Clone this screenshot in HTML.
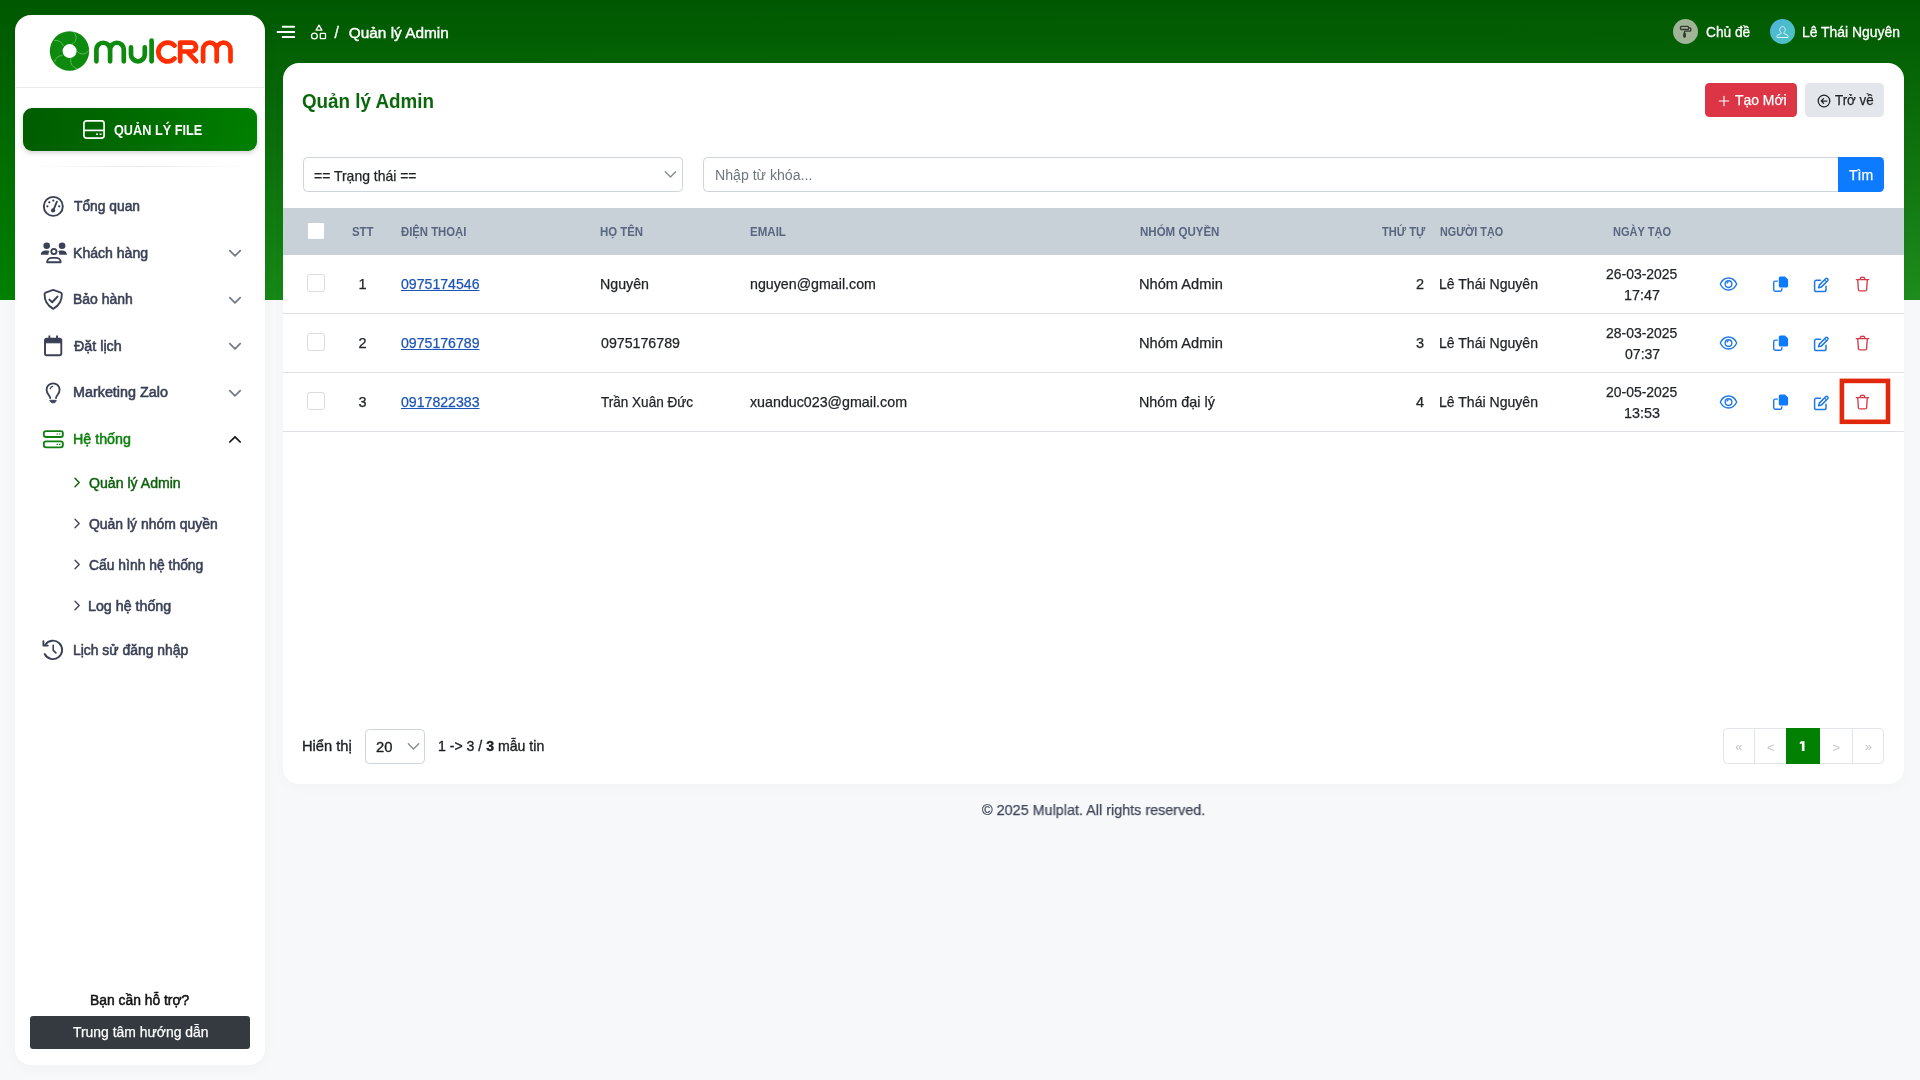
<!DOCTYPE html>
<html lang="vi">
<head>
<meta charset="utf-8">
<title>Quản lý Admin</title>
<style>
*{box-sizing:border-box;margin:0;padding:0}
html,body{width:1920px;height:1080px;overflow:hidden}
body{font-family:"Liberation Sans",sans-serif;background:#f7f8fa;color:#212529;position:relative;font-size:14px}
.abs{position:absolute}
.t,.th,.td{transform-origin:0 50%}
#L{position:absolute;left:0;top:0;width:1920px;height:1080px;will-change:transform}
.t{position:absolute;white-space:nowrap;line-height:1}
#band{position:absolute;left:0;top:0;width:1920px;height:300px;background:linear-gradient(to bottom,rgba(0,89,0,1) 0%,rgba(0,89,0,.9) 12%,rgba(0,89,0,0) 100%),linear-gradient(to right,#008000 0%,#038103 1%,#168816 14%,#1e8c1e 100%)}
#side{position:absolute;left:15px;top:15px;width:250px;height:1050px;background:#fff;border-radius:16px;box-shadow:0 3px 14px rgba(0,0,0,.03)}
#card{position:absolute;left:283px;top:63px;width:1621px;height:721px;background:#fff;border-radius:16px;box-shadow:0 3px 14px rgba(0,0,0,.022)}
.m{color:#3a4156;font-size:14px;-webkit-text-stroke:.55px #3a4156}
.g{color:#0f800f;-webkit-text-stroke:.5px #0f800f}

.th{position:absolute;white-space:nowrap;line-height:1;font-size:12px;font-weight:bold;color:#58667f;top:225.5px}
.td{position:absolute;white-space:nowrap;line-height:1;font-size:14.5px;color:#212529;-webkit-text-stroke:.25px #212529}
.lnk{color:#1c55b5;-webkit-text-stroke:.25px #1c55b5;text-decoration:underline;text-underline-offset:1.2px;text-decoration-thickness:1px}
.cb{position:absolute;left:307px;width:18px;height:18px;border:1.2px solid #d9dce0;border-radius:3px;background:#fff}
.sep{position:absolute;left:283px;width:1621px;height:1.2px;background:#dcdfe3}
.ic{position:absolute;overflow:visible}
#tfile{left:113.72px!important;transform:scaleX(0.9066)}
#m1{left:73.83px!important;transform:scaleX(0.9862)}
#m2{left:73.02px!important;transform:scaleX(1.0048)}
#m3{left:72.69px!important;transform:scaleX(0.9972)}
#m4{left:73.99px!important;transform:scaleX(1.0226)}
#m5{left:73.12px!important;transform:scaleX(1.0250)}
#m6{left:73.12px!important;transform:scaleX(1.0185)}
#s1{left:88.75px!important;transform:scaleX(1.0073)}
#s2{left:88.92px!important;transform:scaleX(0.9960)}
#s3{left:88.90px!important;transform:scaleX(0.9923)}
#s4{left:88.43px!important;transform:scaleX(1.0170)}
#m7{left:73.05px!important;transform:scaleX(0.9931)}
#thelp{left:90.43px!important;transform:scaleX(0.9898)}
#tguide{left:72.60px!important;transform:scaleX(0.9594)}
#bc{left:348.75px!important;transform:scaleX(1.0000)}
#tcd{left:1705.53px!important;transform:scaleX(0.9799)}
#tuser{left:1802.09px!important;transform:scaleX(0.9943)}
#title{left:302.20px!important;transform:scaleX(0.9393)}
#tnew{left:1734.70px!important;transform:scaleX(0.9593)}
#tback{left:1834.82px!important;transform:scaleX(0.9191)}
#tfind{left:1849.44px!important;transform:scaleX(0.9685)}
#tsel{left:313.53px!important;transform:scaleX(0.9633)}
#tph{left:714.85px!important;transform:scaleX(1.0080)}
#h1{left:351.73px!important;transform:scaleX(0.9523)}
#h2{left:400.58px!important;transform:scaleX(0.9433)}
#h3{left:599.95px!important;transform:scaleX(0.9511)}
#h4{left:750.00px!important;transform:scaleX(0.9623)}
#h5{left:1139.62px!important;transform:scaleX(0.9608)}
#h6{left:1381.59px!important;transform:scaleX(0.9279)}
#h7{left:1439.61px!important;transform:scaleX(0.8987)}
#h8{left:1613.04px!important;transform:scaleX(0.9194)}
#r1p{left:400.94px!important;transform:scaleX(0.9733)}
#r2p{left:400.94px!important;transform:scaleX(0.9733)}
#r3p{left:400.94px!important;transform:scaleX(0.9733)}
#r1h{left:600.46px!important;transform:scaleX(0.9807)}
#r2h{left:600.73px!important;transform:scaleX(0.9791)}
#r3h{left:600.91px!important;transform:scaleX(0.9334)}
#r1e{left:749.95px!important;transform:scaleX(0.9807)}
#r3e{left:750.16px!important;transform:scaleX(0.9824)}
#r1g{left:1139.25px!important;transform:scaleX(1.0094)}
#r2g{left:1139.25px!important;transform:scaleX(1.0093)}
#r3g{left:1139.34px!important;transform:scaleX(0.9904)}
#r1c{left:1438.97px!important;transform:scaleX(0.9691)}
#r2c{left:1438.98px!important;transform:scaleX(0.9691)}
#r3c{left:1438.98px!important;transform:scaleX(0.9691)}
#r1d{left:1606.36px!important;transform:scaleX(0.9620)}
#r2d{left:1606.36px!important;transform:scaleX(0.9620)}
#r3d{left:1606.36px!important;transform:scaleX(0.9620)}
#r1t{left:1623.93px!important;transform:scaleX(0.9882)}
#r2t{left:1624.81px!important;transform:scaleX(0.9691)}
#r3t{left:1623.78px!important;transform:scaleX(0.9883)}
#fshow{left:302.41px!important;transform:scaleX(1.0124)}
#f20{left:375.67px!important;transform:scaleX(1.0199)}
#fcount{left:437.96px!important;transform:scaleX(0.9726)}
#copy{left:981.84px!important;transform:scaleX(0.9919)}

</style>
</head>
<body>
<div id="L">
<div id="band"></div>
<div id="side"></div>
<!-- logo -->
<svg class="abs" style="left:0;top:0" width="270" height="100" viewBox="0 0 270 100">
<circle cx="69.5" cy="51" r="19.7" fill="#0e8a0e"/>
<g fill="none" stroke="#62c862" stroke-width=".8">
<path d="M73.4 32.2A7 7 0 0 1 72.1 44.1"/>
<path d="M88.9 50.2A7.2 7.2 0 0 1 76.8 51"/>
<path d="M54 40.5 a8.5 8.5 0 0 1 9.5 5.5"/>
<path d="M54.5 62 a8.5 8.5 0 0 1 8 -6.5"/>
<path d="M77.700 69A8.500 8.500 0 0 1 70.900 58.400"/>
</g>
<circle cx="69.6" cy="51.1" r="7" fill="#fff"/>
<g fill="none" stroke="#0e8a0e" stroke-width="4.7" stroke-linecap="round" stroke-linejoin="round">
<path d="M96.4 61.3V49.6a6.85 6.85 0 0 1 13.7 0V61.3M110.1 49.6a6.85 6.85 0 0 1 13.7 0V61.3"/>
<path d="M131 47.4V54.4a6.9 6.9 0 0 0 13.8 0V47.4"/>
<path d="M151.6 40.5V61.3"/>
</g>
<g fill="none" stroke="#ff2e00" stroke-width="4.7" stroke-linecap="round" stroke-linejoin="round">
<path d="M174.6 45.6A9.4 9.4 0 1 0 174.6 58.4"/>
<path d="M180.2 61.3V42.6H191.6a4.45 4.45 0 0 1 0 8.9H180.4M187.6 52.2L196.2 61.2"/>
<path d="M203.1 61.3V49.5a6.8 6.8 0 0 1 13.6 0V61.3M216.7 49.5a6.9 6.9 0 0 1 13.8 0V61.3"/>
</g>
</svg>
<div class="abs" style="left:15px;top:87px;width:250px;height:1px;background:#e9ebee"></div>
<!-- file button -->
<div class="abs" style="left:23px;top:108px;width:234px;height:43px;border-radius:9px;background:linear-gradient(100deg,#005c00 0%,#006a00 45%,#008000 100%);box-shadow:0 2px 5px rgba(0,0,0,.18)"></div>
<svg class="abs" style="left:83px;top:120px" width="22" height="19" viewBox="0 0 22 19" fill="none" stroke="#fff" stroke-width="1.7"><rect x=".9" y=".9" width="20.2" height="17.2" rx="2.6"/><path d="M.9 10.4H21.1"/><path d="M13 14.3h2M16.6 14.3h2" stroke-width="1.6"/></svg>
<div class="t" id="tfile" style="left:114px;top:122.5px;font-size:14px;font-weight:bold;color:#fff">QUẢN LÝ FILE</div>
<div class="abs" style="left:31px;top:166px;width:218px;height:1px;background:linear-gradient(90deg,rgba(0,0,0,0),rgba(0,0,0,.09),rgba(0,0,0,0))"></div>
<!-- menu -->
<div class="t m" id="m1" style="left:73px;top:199.4px">Tổng quan</div>
<div class="t m" id="m2" style="left:73px;top:245.5px">Khách hàng</div>
<div class="t m" id="m3" style="left:73px;top:292px">Bảo hành</div>
<div class="t m" id="m4" style="left:73px;top:338.5px">Đặt lịch</div>
<div class="t m" id="m5" style="left:73px;top:385.4px">Marketing Zalo</div>
<div class="t m g" id="m6" style="left:73px;top:431.7px">Hệ thống</div>
<div class="t m" id="s1" style="left:89px;top:476px;color:#0a5e0a;-webkit-text-stroke:.45px #0a5e0a">Quản lý Admin</div>
<div class="t m" id="s2" style="left:89px;top:517px">Quản lý nhóm quyền</div>
<div class="t m" id="s3" style="left:89px;top:558px">Cấu hình hệ thống</div>
<div class="t m" id="s4" style="left:89px;top:599px">Log hệ thống</div>
<div class="t m" id="m7" style="left:73px;top:642.5px">Lịch sử đăng nhập</div>
<!-- sidebar icons -->
<svg class="ic" style="left:40px;top:194px" width="26" height="26" viewBox="40 194 26 26" fill="none" stroke="#3a4156" stroke-width="1.900" stroke-linecap="round"><circle cx="53.300" cy="206.400" r="9.500"/><path d="M56.900 201.700L53.700 209.300" stroke-width="1.900"/><circle cx="53.100" cy="210.400" r="2.150" fill="#3a4156" stroke="none"/><g fill="#3a4156" stroke="none"><circle cx="47.400" cy="206.300" r="1.150"/><circle cx="49.300" cy="202.300" r="1.150"/><circle cx="53.300" cy="200.600" r="1.150"/><circle cx="59.200" cy="206.300" r="1.150"/></g></svg>
<svg class="ic" style="left:38px;top:240px" width="32" height="26" viewBox="38 240 32 26" fill="#3a4156"><circle cx="46.700" cy="245.700" r="3.300"/><circle cx="62.100" cy="245.700" r="3.300"/><path d="M40.800 254.800c0-2.600 1.800-4.300 4.300-4.300h2.600c.8 0 1.300.3 1.900.8-1 1-1.300 2.200-1.100 3.500z"/><path d="M66.900 254.800c0-2.600-1.800-4.300-4.300-4.300h-2.600c-.8 0-1.300.3-1.900.8 1 1 1.300 2.200 1.100 3.500z"/><circle cx="53.900" cy="251.500" r="2.600" fill="none" stroke="#3a4156" stroke-width="1.850"/><path d="M47.100 262.200c0-2.700 2.300-4.300 5-4.300h3.600c2.700 0 5 1.600 5 4.300z" fill="none" stroke="#3a4156" stroke-width="1.850" stroke-linejoin="round"/></svg>
<svg class="ic" style="left:40px;top:286px" width="26" height="26" viewBox="40 286 26 26" fill="none" stroke="#3a4156" stroke-width="1.900" stroke-linejoin="round" stroke-linecap="round"><path d="M53.200 289.900l7.600 2.800c.700.250 1.050.800 1.050 1.500 0 6.200-2.600 11.300-8.650 14.600-6.050-3.300-8.650-8.400-8.650-14.600 0-.700.350-1.250 1.050-1.500z"/><path d="M49.400 299.600l2.800 2.700 5.300-5.700" stroke-width="2"/></svg>
<svg class="ic" style="left:40px;top:332px" width="26" height="26" viewBox="40 332 26 26" fill="none" stroke="#3a4156" stroke-width="1.900" stroke-linejoin="round"><rect x="45" y="338.700" width="16.300" height="16.500" rx="1.800"/><path d="M45 339.500h16.300v3.300H45z" fill="#3a4156" stroke-width="1"/><path d="M49.400 335.600v3M57 335.600v3" stroke-linecap="butt"/></svg>
<svg class="ic" style="left:40px;top:378px" width="26" height="28" viewBox="40 378 26 28" fill="none" stroke="#3a4156" stroke-width="1.850" stroke-linecap="round" stroke-linejoin="round"><path d="M50.200 398.100c0-2.700-3.600-3.900-3.600-8.300a6.500 6.500 0 0 1 13 0c0 4.400-3.600 5.600-3.600 8.300"/><path d="M50.300 388.600a2.900 2.900 0 0 1 2.300-2.300" stroke-width="1.300"/><path d="M50 400.300h6.300l-.8 1.700a1.500 1.500 0 0 1-1.300.8h-2.100a1.500 1.500 0 0 1-1.300-.8z" fill="#3a4156" stroke-width=".8"/></svg>
<svg class="ic" style="left:40px;top:426px" width="26" height="26" viewBox="40 426 26 26" fill="none" stroke="#0f800f" stroke-width="1.800"><rect x="43.800" y="431.100" width="19.100" height="5.900" rx="2.300"/><rect x="43.800" y="441.400" width="19.100" height="5.900" rx="2.300"/><path d="M56.600 434h1.300M59 434h1.300M56.600 444.300h1.300M59 444.300h1.300" stroke-width="1.200"/></svg>
<svg class="ic" style="left:40px;top:637px" width="26" height="26" viewBox="40 637 26 26" fill="none" stroke="#3a4156" stroke-width="1.900" stroke-linecap="round" stroke-linejoin="round"><path d="M45.300 644.700A9.200 9.200 0 1 1 44.700 654"/><path d="M43.400 641.300v4.300h4.400"/><path d="M53.200 645.300v5l2.700 2.600" stroke-width="1.600"/></svg>
<!-- chevrons -->
<svg class="ic" style="left:228px;top:249px" width="14" height="9" viewBox="0 0 14 9" fill="none" stroke="#727986" stroke-width="1.700" stroke-linecap="round" stroke-linejoin="round"><path d="M1.800 1.700L7 6.800l5.200-5.100"/></svg>
<svg class="ic" style="left:228px;top:295.5px" width="14" height="9" viewBox="0 0 14 9" fill="none" stroke="#727986" stroke-width="1.700" stroke-linecap="round" stroke-linejoin="round"><path d="M1.800 1.700L7 6.800l5.200-5.100"/></svg>
<svg class="ic" style="left:228px;top:342px" width="14" height="9" viewBox="0 0 14 9" fill="none" stroke="#727986" stroke-width="1.700" stroke-linecap="round" stroke-linejoin="round"><path d="M1.800 1.700L7 6.800l5.200-5.100"/></svg>
<svg class="ic" style="left:228px;top:389px" width="14" height="9" viewBox="0 0 14 9" fill="none" stroke="#727986" stroke-width="1.700" stroke-linecap="round" stroke-linejoin="round"><path d="M1.800 1.700L7 6.800l5.200-5.100"/></svg>
<svg class="ic" style="left:228px;top:434.500px" width="14" height="9" viewBox="0 0 14 9" fill="none" stroke="#111" stroke-width="1.700" stroke-linecap="round" stroke-linejoin="round"><path d="M1.800 7L7 1.900 12.200 7"/></svg>
<svg class="ic" style="left:72.9px;top:477.0px" width="8" height="11" viewBox="0 0 8 11" fill="none" stroke="#0a5e0a" stroke-width="1.400" stroke-linecap="round" stroke-linejoin="round"><path d="M2 1.300l4.200 4.200L2 9.700"/></svg>
<svg class="ic" style="left:72.9px;top:518.0px" width="8" height="11" viewBox="0 0 8 11" fill="none" stroke="#3a4156" stroke-width="1.300" stroke-linecap="round" stroke-linejoin="round"><path d="M2 1.300l4.200 4.200L2 9.700"/></svg>
<svg class="ic" style="left:72.9px;top:559.0px" width="8" height="11" viewBox="0 0 8 11" fill="none" stroke="#3a4156" stroke-width="1.300" stroke-linecap="round" stroke-linejoin="round"><path d="M2 1.300l4.200 4.200L2 9.700"/></svg>
<svg class="ic" style="left:72.9px;top:600.0px" width="8" height="11" viewBox="0 0 8 11" fill="none" stroke="#3a4156" stroke-width="1.300" stroke-linecap="round" stroke-linejoin="round"><path d="M2 1.300l4.200 4.200L2 9.700"/></svg>
<!-- help -->
<div class="t" id="thelp" style="left:91px;top:993px;font-size:14px;color:#111;-webkit-text-stroke:.5px #111">Bạn cần hỗ trợ?</div>
<div class="abs" style="left:30.2px;top:1015.5px;width:219.8px;height:33.3px;border-radius:3px;background:#343a40"></div>
<div class="t" id="tguide" style="left:72px;top:1025px;font-size:14.5px;color:#fff;-webkit-text-stroke:.25px #fff">Trung tâm hướng dẫn</div>
<div id="card"></div>
<!-- topbar -->
<svg class="ic" style="left:274px;top:22px" width="24" height="20" viewBox="274 22 24 20" stroke="#fff" stroke-width="2" stroke-linecap="round" fill="none"><path d="M282.7 26.7H294.2M277.6 31.9H294.2M282.7 37.1H294.2"/></svg>
<svg class="ic" style="left:308px;top:22px" width="22" height="20" viewBox="308 22 22 20" stroke="#fff" stroke-width="1.3" fill="none" stroke-linejoin="round"><path d="M319 25.2l2.9 5h-5.8z"/><circle cx="314.4" cy="36" r="2.9"/><rect x="320.3" y="33.4" width="5.2" height="5.2" rx=".6"/></svg>
<div class="t" id="bslash" style="left:334.6px;top:25px;font-size:15.6px;color:#fff;-webkit-text-stroke:.3px #fff">/</div>
<div class="t" id="bc" style="left:348.5px;top:24.5px;font-size:15.4px;color:#fff;-webkit-text-stroke:.4px #fff">Quản lý Admin</div>
<div class="abs" style="left:1673px;top:19px;width:25px;height:25px;border-radius:50%;background:#a0b497"></div>
<svg class="ic" style="left:1678.6px;top:24.5px" width="13.6" height="13.6" viewBox="0 0 15 15" fill="none" stroke="#323a32" stroke-width="1.45" stroke-linejoin="round" stroke-linecap="round"><rect x="1.6" y="1.6" width="9" height="3.4" rx="1.2"/><path d="M10.8 3.2h1.2a1 1 0 0 1 1 1v1.6a1 1 0 0 1-1 1H7a.9.9 0 0 0-.9.900v1.300"/><rect x="5.1" y="9.2" width="2" height="4.400" rx=".6" fill="#323a32" stroke-width="1"/></svg>
<div class="t" id="tcd" style="left:1706px;top:24.5px;font-size:14px;color:#fff;-webkit-text-stroke:.3px #fff">Chủ đề</div>
<div class="abs" style="left:1770px;top:19px;width:25px;height:25px;border-radius:50%;background:linear-gradient(135deg,#4fb3de,#4cc6bd)"></div>
<svg class="ic" style="left:1774.8px;top:24.6px" width="15" height="15" viewBox="0 0 15 15" fill="none" stroke="#d9f3f6" stroke-width="1" stroke-linejoin="round"><path d="M7.5 1.6c1.7 0 2.7 1.3 2.7 3 0 1.3-.6 2.5-1.3 3v.9l3.3 1.5c.5.2.8.7.8 1.200v1.300H2v-1.300c0-.5.3-1 .8-1.200l3.300-1.500v-.9c-.7-.5-1.300-1.700-1.300-3 0-1.700 1-3 2.700-3z"/></svg>
<div class="t" id="tuser" style="left:1803.5px;top:24.5px;font-size:14px;color:#fff;-webkit-text-stroke:.3px #fff">Lê Thái Nguyên</div>
<!-- card header -->
<div class="t" id="title" style="left:303px;top:90.5px;font-size:20px;font-weight:bold;color:#0b670b">Quản lý Admin</div>
<div class="abs" style="left:1705px;top:83px;width:92px;height:34px;border-radius:4.5px;background:#dc3545"></div>
<svg class="ic" style="left:1718px;top:94.7px" width="12" height="12" viewBox="0 0 12 12" stroke="#fff" stroke-width="1.15" fill="none" stroke-linecap="round"><path d="M6 1.300V10.700M1.300 6H10.700"/></svg>
<div class="t" id="tnew" style="left:1735px;top:93px;font-size:14.5px;color:#fff;-webkit-text-stroke:.25px #fff">Tạo Mới</div>
<div class="abs" style="left:1805px;top:83px;width:79px;height:34px;border-radius:4.5px;background:#e3e6ea"></div>
<svg class="ic" style="left:1816.7px;top:93.6px" width="14" height="14" viewBox="0 0 14 14" stroke="#212529" stroke-width="1.25" fill="none" stroke-linecap="round" stroke-linejoin="round"><circle cx="7" cy="7" r="5.8"/><path d="M10 7H4.300M6.600 4.600L4.200 7l2.400 2.400"/></svg>
<div class="t" id="tback" style="left:1835px;top:92.9px;font-size:14.500px;color:#212529;-webkit-text-stroke:.25px #212529">Trở về</div>
<!-- filters -->
<div class="abs" style="left:303px;top:157px;width:380px;height:35px;border:1px solid #ced4da;border-radius:4.500px;background:#fff"></div>
<div class="t" id="tsel" style="left:314px;top:168.5px;font-size:14.500px;color:#212529;-webkit-text-stroke:.25px #212529">== Trạng thái ==</div>
<svg class="ic" style="left:664px;top:170px" width="13" height="9" viewBox="0 0 13 9" stroke="#8a9096" stroke-width="1.500" fill="none" stroke-linecap="round" stroke-linejoin="round"><path d="M1.300 1.800L6.500 7l5.200-5.200"/></svg>
<div class="abs" style="left:703px;top:157px;width:1138px;height:35px;border:1px solid #ced4da;border-radius:4.500px 0 0 4.500px;background:#fff"></div>
<div class="t" id="tph" style="left:716px;top:168px;font-size:14px;color:#6c757d">Nhập từ khóa...</div>
<div class="abs" style="left:1838px;top:157px;width:46px;height:35px;border-radius:0 4.500px 4.500px 0;background:#0d7bff"></div>
<div class="t" id="tfind" style="left:1849.500px;top:168px;font-size:14.500px;color:#fff;-webkit-text-stroke:.25px #fff">Tìm</div>
<!-- table -->
<div class="abs" style="left:283px;top:208px;width:1621px;height:47px;background:#c8d0d8"></div>
<div class="abs" style="left:307.8px;top:223.1px;width:16.3px;height:16.3px;border-radius:1px;background:#fff"></div>
<div class="th" id="h1" style="left:352px">STT</div>
<div class="th" id="h2" style="left:400.500px">ĐIỆN THOẠI</div>
<div class="th" id="h3" style="left:601px">HỌ TÊN</div>
<div class="th" id="h4" style="left:750.500px">EMAIL</div>
<div class="th" id="h5" style="left:1140px">NHÓM QUYỀN</div>
<div class="th" id="h6" style="left:1382px">THỨ TỰ</div>
<div class="th" id="h7" style="left:1440.500px">NGƯỜI TẠO</div>
<div class="th" id="h8" style="left:1613.500px">NGÀY TẠO</div>
<div class="cb" style="top:273.8px"></div>
<div class="td" id="r1n" style="left:358.500px;top:276.7px">1</div>
<div class="td lnk" id="r1p" style="left:400.500px;top:276.7px">0975174546</div>
<div class="td" id="r1h" style="left:600.500px;top:276.7px">Nguyên</div>
<div class="td" id="r1e" style="left:750.500px;top:276.7px">nguyen@gmail.com</div>
<div class="td" id="r1g" style="left:1140.500px;top:276.7px">Nhóm Admin</div>
<div class="td" id="r1o" style="left:1416px;top:276.7px">2</div>
<div class="td" id="r1c" style="left:1440.500px;top:276.7px">Lê Thái Nguyên</div>
<div class="td" id="r1d" style="left:1606.500px;top:266.8px">26-03-2025</div>
<div class="td" id="r1t" style="left:1625px;top:287.5px">17:47</div>
<svg class="ic" style="left:1718.8px;top:275.7px" width="19" height="16" viewBox="0 0 19 16" fill="none" stroke="#1f78e8" stroke-width="1.350" stroke-linejoin="round"><path d="M1.300 8C3 4.200 6 2 9.500 2S16 4.200 17.700 8C16 11.800 13 14 9.500 14S3 11.800 1.300 8z"/><circle cx="9.500" cy="8.1" r="3.35"/><path d="M8.200 7.600a1.500 1.500 0 0 1 1.500-1.700" stroke-width="1.200"/></svg>
<svg class="ic" style="left:1772px;top:276.0px" width="17" height="16" viewBox="0 0 17 16" fill="none"><path d="M5.800 5.100H3.300a1.600 1.600 0 0 0-1.600 1.600v6.900a1.600 1.600 0 0 0 1.600 1.600h4.900a1.600 1.600 0 0 0 1.600-1.600v-1.400" stroke="#1f78e8" stroke-width="1.400"/><path d="M8.300.6h4.700l3.100 3v6.300a1.500 1.500 0 0 1-1.500 1.500H8.300a1.500 1.500 0 0 1-1.500-1.500V2.100A1.500 1.500 0 0 1 8.300.6z" fill="#0d7bff"/></svg>
<svg class="ic" style="left:1813px;top:276.8px" width="17" height="16" viewBox="0 0 17 16" fill="none" stroke="#1f78e8" stroke-width="1.500" stroke-linecap="round" stroke-linejoin="round"><path d="M7.500 3.200H3.300a1.700 1.700 0 0 0-1.700 1.700v8a1.700 1.700 0 0 0 1.700 1.700h8a1.700 1.700 0 0 0 1.700-1.700V9.200"/><path d="M12.600 1.700a1.450 1.450 0 0 1 2.050 2.050L8.300 10.100l-2.700.700.700-2.700z"/><path d="M11.500 2.800l2 2" stroke-width="1.100"/></svg>
<svg class="ic" style="left:1855px;top:276.0px" width="15" height="16" viewBox="0 0 15 16" fill="none" stroke="#d63a4a" stroke-width="1.350" stroke-linecap="round" stroke-linejoin="round"><path d="M1.300 3.600H13.700"/><path d="M5 3.400l.800-1.700a.8.800 0 0 1 .700-.400h2a.8.800 0 0 1 .700.400l.800 1.700"/><path d="M2.700 3.800l.700 9.900a1.300 1.300 0 0 0 1.300 1.200h5.600a1.300 1.300 0 0 0 1.300-1.200l.700-9.900"/></svg>
<div class="sep" style="top:313.15px"></div>
<div class="cb" style="top:332.8px"></div>
<div class="td" id="r2n" style="left:358.500px;top:335.7px">2</div>
<div class="td lnk" id="r2p" style="left:400.500px;top:335.7px">0975176789</div>
<div class="td" id="r2h" style="left:600.500px;top:335.7px">0975176789</div>
<div class="td" id="r2g" style="left:1140.500px;top:335.7px">Nhóm Admin</div>
<div class="td" id="r2o" style="left:1416px;top:335.7px">3</div>
<div class="td" id="r2c" style="left:1440.500px;top:335.7px">Lê Thái Nguyên</div>
<div class="td" id="r2d" style="left:1606.500px;top:325.8px">28-03-2025</div>
<div class="td" id="r2t" style="left:1625px;top:346.5px">07:37</div>
<svg class="ic" style="left:1718.8px;top:334.7px" width="19" height="16" viewBox="0 0 19 16" fill="none" stroke="#1f78e8" stroke-width="1.350" stroke-linejoin="round"><path d="M1.300 8C3 4.200 6 2 9.500 2S16 4.200 17.700 8C16 11.800 13 14 9.500 14S3 11.800 1.300 8z"/><circle cx="9.500" cy="8.1" r="3.35"/><path d="M8.200 7.600a1.500 1.500 0 0 1 1.500-1.700" stroke-width="1.200"/></svg>
<svg class="ic" style="left:1772px;top:335.0px" width="17" height="16" viewBox="0 0 17 16" fill="none"><path d="M5.800 5.100H3.300a1.600 1.600 0 0 0-1.600 1.600v6.900a1.600 1.600 0 0 0 1.600 1.600h4.900a1.600 1.600 0 0 0 1.600-1.600v-1.400" stroke="#1f78e8" stroke-width="1.400"/><path d="M8.300.6h4.700l3.100 3v6.300a1.500 1.500 0 0 1-1.500 1.500H8.300a1.500 1.500 0 0 1-1.500-1.500V2.100A1.500 1.500 0 0 1 8.300.6z" fill="#0d7bff"/></svg>
<svg class="ic" style="left:1813px;top:335.8px" width="17" height="16" viewBox="0 0 17 16" fill="none" stroke="#1f78e8" stroke-width="1.500" stroke-linecap="round" stroke-linejoin="round"><path d="M7.500 3.200H3.300a1.700 1.700 0 0 0-1.700 1.700v8a1.700 1.700 0 0 0 1.700 1.700h8a1.700 1.700 0 0 0 1.700-1.700V9.200"/><path d="M12.600 1.700a1.450 1.450 0 0 1 2.050 2.050L8.300 10.100l-2.700.700.700-2.700z"/><path d="M11.500 2.800l2 2" stroke-width="1.100"/></svg>
<svg class="ic" style="left:1855px;top:335.0px" width="15" height="16" viewBox="0 0 15 16" fill="none" stroke="#d63a4a" stroke-width="1.350" stroke-linecap="round" stroke-linejoin="round"><path d="M1.300 3.600H13.700"/><path d="M5 3.400l.800-1.700a.8.800 0 0 1 .700-.400h2a.8.800 0 0 1 .700.400l.800 1.700"/><path d="M2.700 3.800l.700 9.900a1.300 1.300 0 0 0 1.300 1.200h5.600a1.300 1.300 0 0 0 1.300-1.200l.700-9.900"/></svg>
<div class="sep" style="top:372.15px"></div>
<div class="cb" style="top:391.8px"></div>
<div class="td" id="r3n" style="left:358.500px;top:394.7px">3</div>
<div class="td lnk" id="r3p" style="left:400.500px;top:394.7px">0917822383</div>
<div class="td" id="r3h" style="left:600.500px;top:394.7px">Trần Xuân Đức</div>
<div class="td" id="r3e" style="left:750.500px;top:394.7px">xuanduc023@gmail.com</div>
<div class="td" id="r3g" style="left:1140.500px;top:394.7px">Nhóm đại lý</div>
<div class="td" id="r3o" style="left:1416px;top:394.7px">4</div>
<div class="td" id="r3c" style="left:1440.500px;top:394.7px">Lê Thái Nguyên</div>
<div class="td" id="r3d" style="left:1606.500px;top:384.8px">20-05-2025</div>
<div class="td" id="r3t" style="left:1625px;top:405.5px">13:53</div>
<svg class="ic" style="left:1718.8px;top:393.7px" width="19" height="16" viewBox="0 0 19 16" fill="none" stroke="#1f78e8" stroke-width="1.350" stroke-linejoin="round"><path d="M1.300 8C3 4.200 6 2 9.500 2S16 4.200 17.700 8C16 11.800 13 14 9.500 14S3 11.800 1.300 8z"/><circle cx="9.500" cy="8.1" r="3.35"/><path d="M8.200 7.600a1.500 1.500 0 0 1 1.500-1.700" stroke-width="1.200"/></svg>
<svg class="ic" style="left:1772px;top:394.0px" width="17" height="16" viewBox="0 0 17 16" fill="none"><path d="M5.800 5.100H3.300a1.600 1.600 0 0 0-1.600 1.600v6.900a1.600 1.600 0 0 0 1.600 1.600h4.900a1.600 1.600 0 0 0 1.600-1.600v-1.400" stroke="#1f78e8" stroke-width="1.400"/><path d="M8.300.6h4.700l3.100 3v6.300a1.500 1.500 0 0 1-1.500 1.500H8.300a1.500 1.500 0 0 1-1.500-1.500V2.100A1.500 1.500 0 0 1 8.300.6z" fill="#0d7bff"/></svg>
<svg class="ic" style="left:1813px;top:394.8px" width="17" height="16" viewBox="0 0 17 16" fill="none" stroke="#1f78e8" stroke-width="1.500" stroke-linecap="round" stroke-linejoin="round"><path d="M7.500 3.200H3.300a1.700 1.700 0 0 0-1.700 1.700v8a1.700 1.700 0 0 0 1.700 1.700h8a1.700 1.700 0 0 0 1.700-1.700V9.200"/><path d="M12.600 1.700a1.450 1.450 0 0 1 2.050 2.050L8.300 10.100l-2.700.700.700-2.700z"/><path d="M11.500 2.800l2 2" stroke-width="1.100"/></svg>
<svg class="ic" style="left:1855px;top:394.0px" width="15" height="16" viewBox="0 0 15 16" fill="none" stroke="#d63a4a" stroke-width="1.350" stroke-linecap="round" stroke-linejoin="round"><path d="M1.300 3.600H13.700"/><path d="M5 3.400l.800-1.700a.8.800 0 0 1 .700-.400h2a.8.800 0 0 1 .700.400l.800 1.700"/><path d="M2.700 3.800l.700 9.900a1.300 1.300 0 0 0 1.300 1.200h5.600a1.300 1.300 0 0 0 1.300-1.200l.700-9.900"/></svg>
<div class="sep" style="top:431.15px"></div>

<!-- highlight -->
<svg class="ic" style="left:1835px;top:374px" width="60" height="54" viewBox="1835 374 60 54"><rect x="1841.9" y="380.9" width="46.1" height="40.9" fill="none" stroke="#e2280a" stroke-width="4.6"/></svg>
<!-- footer -->
<div class="t" id="fshow" style="left:303px;top:739px;font-size:14.500px;color:#1b1e22;-webkit-text-stroke:.35px #1b1e22">Hiển thị</div>
<div class="abs" style="left:365px;top:729px;width:60px;height:35px;border:1px solid #ced4da;border-radius:4.500px;background:#fff"></div>
<div class="t" id="f20" style="left:375.500px;top:740px;font-size:14.500px;color:#1b1e22;-webkit-text-stroke:.35px #1b1e22">20</div>
<svg class="ic" style="left:407px;top:742px" width="13" height="9" viewBox="0 0 13 9" stroke="#8a9096" stroke-width="1.500" fill="none" stroke-linecap="round" stroke-linejoin="round"><path d="M1.300 1.800L6.500 7l5.200-5.200"/></svg>
<div class="t" id="fcount" style="left:438px;top:739px;font-size:14.500px;color:#1b1e22;-webkit-text-stroke:.35px #1b1e22">1 -&gt; 3 / <b>3</b> mẫu tin</div>
<div class="abs" style="left:1723px;top:728px;width:161px;height:35.5px;border:1px solid #e2e5e8;border-radius:4.500px;background:#fff"></div>
<div class="abs" style="left:1754px;top:728.5px;width:1px;height:34.5px;background:#e2e5e8"></div>
<div class="abs" style="left:1852px;top:728.5px;width:1px;height:34.5px;background:#e2e5e8"></div>
<div class="abs" style="left:1786px;top:728px;width:34px;height:35.5px;background:#028002"></div>
<div class="t" style="left:1735.3px;top:740px;font-size:13px;color:#c2c6cb">«</div>
<div class="t" style="left:1767px;top:740.500px;font-size:13px;color:#c2c6cb">&lt;</div>
<svg class="ic" style="left:1795px;top:738px" width="14" height="16" viewBox="1795 738 14 16"><path d="M1801.8 741.2H1804.5V751.1H1801.9V743.500L1799.800 744.100V742.100Z" fill="#fff"/></svg>
<div class="t" style="left:1832.4px;top:740.500px;font-size:13px;color:#c2c6cb">&gt;</div>
<div class="t" style="left:1864.7px;top:740px;font-size:13px;color:#c2c6cb">»</div>
<div class="t" id="copy" style="left:982px;top:803px;font-size:14.500px;color:#3f4759;-webkit-text-stroke:.25px #3f4759">© 2025 Mulplat. All rights reserved.</div>
</div>
</body>
</html>
